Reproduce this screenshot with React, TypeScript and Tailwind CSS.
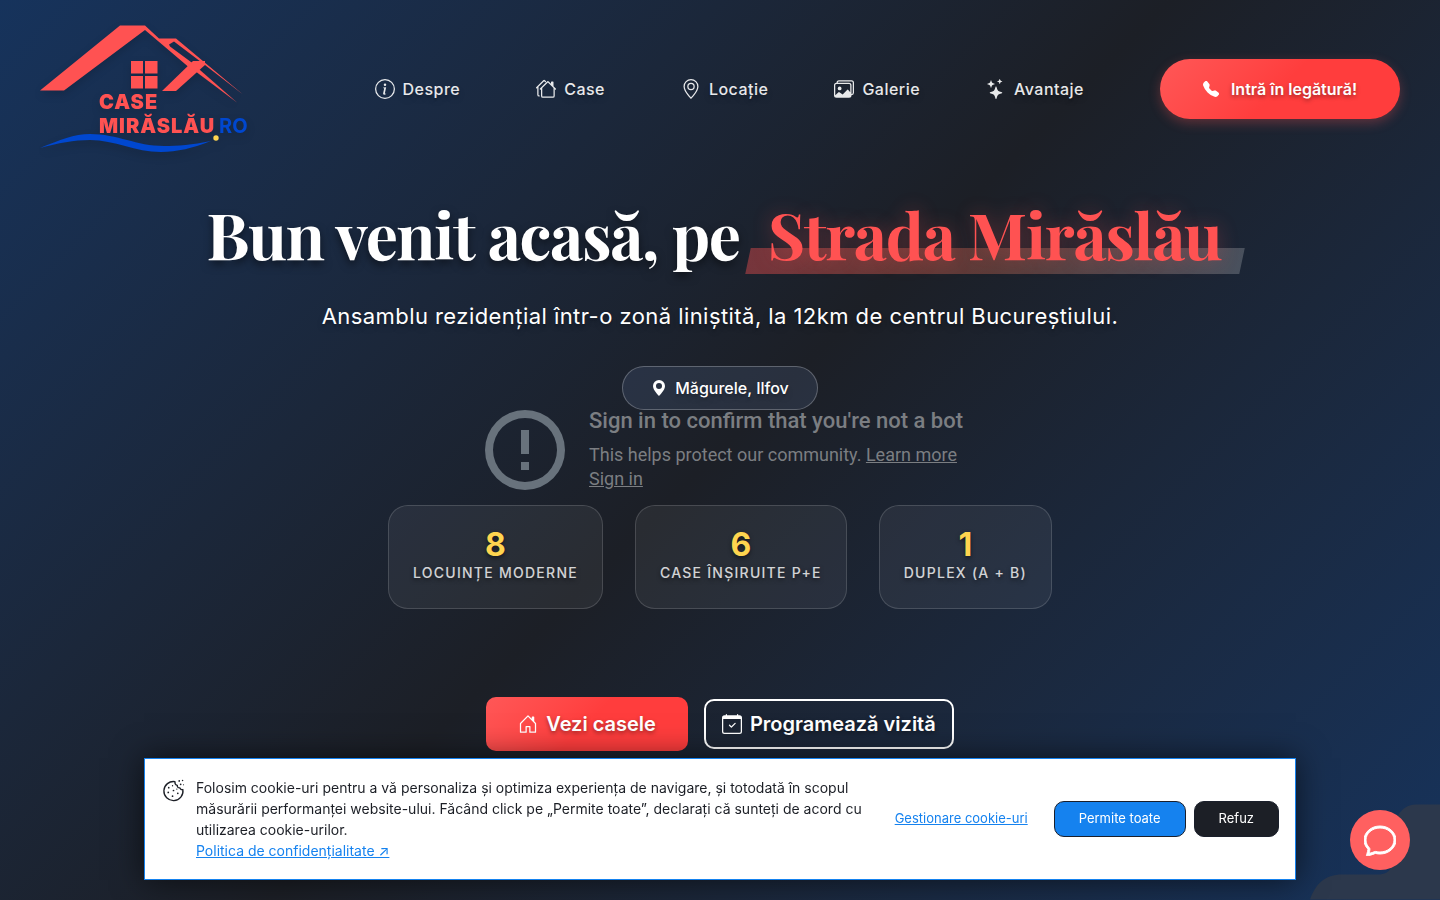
import type { ReactNode } from 'react'
import type { IconType } from 'react-icons'
import {
  BsCalendarCheck,
  BsChat,
  BsGeoAlt,
  BsGeoAltFill,
  BsHouseDoor,
  BsHouses,
  BsImages,
  BsInfoCircle,
  BsStars,
  BsTelephoneFill,
} from 'react-icons/bs'

const STATS = [
  { value: '8', label: 'Locuințe moderne' },
  { value: '6', label: 'Case înșiruite P+E' },
  { value: '1', label: 'Duplex (A + B)' },
]

function Logo() {
  return (
    <a href="#" className="block w-52 shrink-0" aria-label="Case Mirăslău">
      <svg viewBox="0 0 208 130" className="h-auto w-full overflow-visible drop-shadow-lg">
        <g fill="#ff5252">
          <path d="M0 66.500 80 1.500h25l14 13h17l67 56-38-29.500-31-23.500-5 3 1 2 23 17-5 3L105 6 24 66.500z" />
          <path d="M122 67l31-30h12v4l-29 26z" />
          <path d="M147 41l5-2 45 39.500z" />
          <path d="M91 37h12v12.500H91zM105 37h12.500v12.500H105zM91 52h12v12.500H91zM105 52h12.500v12.500H105z" />
        </g>
        <path
          d="M0 124C20 116 34 110 50 110c28 0 46 12 74 12 14 0 28-1 47-5-18 7-34 11-50 11-26 0-46-12-71-12-16 0-32 3-50 8z"
          fill="#0047cf"
        />
        <circle cx="176" cy="114" r="2.700" fill="#ffd54f" />
        <g fontFamily="Inter, sans-serif" fontSize="20">
          <g fill="#ff5252" fontWeight="900" className="tracking-wider">
            <text x="59" y="85">CASE</text>
            <text x="59" y="109">MIRĂSLĂU</text>
          </g>
          <text x="179" y="109" fill="#0047cf" fontWeight="700">RO</text>
        </g>
      </svg>
    </a>
  )
}

function NavLink({ href, icon: Icon, label }: { href: string; icon: IconType; label: string }) {
  return (
    <a
      href={href}
      className="flex items-center gap-2 text-base font-medium tracking-[0.03em] text-white/90 text-shadow-lg"
    >
      <Icon size={20} aria-hidden="true" />
      {label}
    </a>
  )
}

function Header() {
  return (
    <header className="flex items-center justify-between px-10 pt-6">
      <Logo />
      <div className="flex items-center gap-19">
        <nav className="flex items-center gap-19">
          <NavLink href="#despre" icon={BsInfoCircle} label="Despre" />
          <NavLink href="#case" icon={BsHouses} label="Case" />
          <div className="flex items-center gap-[66px]">
            <NavLink href="#locatie" icon={BsGeoAlt} label="Locație" />
            <NavLink href="#galerie" icon={BsImages} label="Galerie" />
            <NavLink href="#avantaje" icon={BsStars} label="Avantaje" />
          </div>
        </nav>
        <a
          href="#contact"
          className="flex h-15 w-60 items-center justify-center gap-3 rounded-full bg-linear-135 from-[#ff5757] to-[#ff3d3d] to-50% text-base font-semibold text-white shadow-[0_4px_12px_rgba(255,82,82,0.3)] text-shadow-[0_2px_4px_rgba(0,0,0,0.4)]"
        >
          <BsTelephoneFill size={16} aria-hidden="true" />
          Intră în legătură!
        </a>
      </div>
    </header>
  )
}

function VideoNotice() {
  return (
    <div className="flex h-20 items-center gap-6 pl-2 text-left font-[Roboto,sans-serif] text-[#7b7e82]">
      <svg viewBox="0 0 80 80" className="size-20 shrink-0 fill-[#68727c]" aria-hidden="true">
        <path d="M40 0a40 40 0 1 0 0 80 40 40 0 0 0 0-80zm0 72a32 32 0 1 1 0-64 32 32 0 0 1 0 64zM36 20h8v24h-8zm0 32h8v8h-8z" />
      </svg>
      <div className="text-lg leading-6">
        <p className="mb-2.5 text-[22px] leading-6 font-medium">
          Sign in to confirm that you're not a bot
        </p>
        <p>
          This helps protect our community.{' '}
          <a href="#learn" className="underline">Learn more</a>
        </p>
        <a href="#signin" className="underline">Sign in</a>
      </div>
    </div>
  )
}

function StatCard({ value, label }: { value: string; label: string }) {
  return (
    <li className="flex h-26 flex-col items-center rounded-[20px] border border-white/15 bg-white/6 px-6 pt-[21px]">
      <span className="text-[32px] leading-9 font-bold text-[#ffd54f] text-shadow-[0_2px_4px_rgba(0,0,0,0.5)]">
        {value}
      </span>
      <span className="text-sm font-medium tracking-[0.09em] text-white/80 uppercase text-shadow-[0_2px_4px_rgba(0,0,0,0.5)]">
        {label}
      </span>
    </li>
  )
}

function Hero() {
  return (
    <main className="flex flex-col items-center text-center">
      <h1 className="mt-10 flex items-baseline gap-4 font-['Playfair_Display','Liberation_Serif',serif] text-[64px] leading-20 font-bold tracking-[-0.02em] whitespace-nowrap text-white text-shadow-[0_4px_8px_rgba(0,0,0,0.5)]">
        Bun venit acasă, pe
        <span className="relative px-3 text-[#ff5252] text-shadow-[0_0_20px_rgba(255,82,82,0.3)]">
          <span className="absolute -inset-x-2 bottom-0 h-[26px] -skew-x-12 bg-linear-90 from-[#ff5252]/40 via-[#ff8060]/28 to-white/20" />
          <span className="relative">Strada Mirăslău</span>
        </span>
      </h1>
      <p className="mt-6 text-[22px] leading-9 tracking-[0.02em] text-white text-shadow-lg">
        Ansamblu rezidențial într-o zonă liniștită, la 12km de centrul Bucureștiului.
      </p>
      <p className="mt-8 flex h-11 items-center gap-2 rounded-full border border-white/25 bg-[#7896c8]/15 px-7 text-base font-medium text-white text-shadow-lg">
        <BsGeoAltFill size={16} aria-hidden="true" />
        Măgurele, Ilfov
      </p>
      <VideoNotice />
      <ul className="mt-[15px] flex gap-8">
        {STATS.map((stat) => (
          <StatCard key={stat.label} {...stat} />
        ))}
      </ul>
      <div className="mt-22 flex items-center gap-4 text-xl font-semibold text-white text-shadow-[0_2px_4px_rgba(0,0,0,0.4)]">
        <a
          href="#case"
          className="flex h-[54px] items-center gap-2 rounded-[10px] bg-linear-135 from-[#ff5757] to-[#ff3d3d] to-50% px-8"
        >
          <BsHouseDoor size={20} aria-hidden="true" />
          Vezi casele
        </a>
        <a href="#vizita" className="flex h-[50px] items-center gap-2 rounded-[10px] border-2 border-white px-4">
          <BsCalendarCheck size={20} aria-hidden="true" />
          Programează vizită
        </a>
      </div>
    </main>
  )
}

function CookieIcon() {
  return (
    <svg viewBox="0 0 22 22" className="mt-[3px] size-[21px] shrink-0 self-start overflow-visible" aria-hidden="true">
      <path
        d="M12.500 1.700A10 10 0 1 0 20.800 10c-1.500.4-2.800-.3-3.100-1.700-1.700.2-2.900-.9-2.700-2.600-1.700-.3-2.700-1.900-2.500-4z"
        fill="none"
        stroke="#1c1f26"
        strokeWidth="1.400"
        strokeLinejoin="round"
      />
      <g fill="#1c1f26">
        <circle cx="6" cy="8" r="0.900" />
        <circle cx="10" cy="6" r="0.700" />
        <circle cx="11" cy="11" r="0.900" />
        <circle cx="5.500" cy="13" r="0.900" />
        <circle cx="10" cy="17" r="0.900" />
        <circle cx="15.500" cy="14" r="0.900" />
        <circle cx="14.500" cy="9.500" r="0.700" />
        <circle cx="17" cy="1" r="0.900" />
        <circle cx="20.500" cy="0.500" r="0.800" />
        <circle cx="18.500" cy="4.500" r="0.900" />
        <circle cx="21.500" cy="5" r="0.600" />
      </g>
    </svg>
  )
}

function CookieButton({ className, children }: { className: string; children: ReactNode }) {
  return (
    <button
      type="button"
      className={`h-9 rounded-[10px] border border-[#1a1f2b] px-6 text-[13px] text-white ${className}`}
    >
      {children}
    </button>
  )
}

function CookieBar() {
  return (
    <section
      aria-label="Cookie-uri"
      className="fixed inset-x-1/10 bottom-5 flex items-center border border-[#1582ef] bg-white py-[18px] pr-4 pl-[18px] shadow-[0_0_30px_rgba(0,0,0,0.6)]"
    >
      <CookieIcon />
      <p className="ml-3 max-w-[680px] flex-1 text-sm leading-[21px] text-[#1c1f26]">
        Folosim cookie-uri pentru a vă personaliza și optimiza experiența de navigare, și totodată în
        scopul măsurării performanței website-ului. Făcând click pe „Permite toate”, declarați că
        sunteți de acord cu utilizarea cookie-urilor.
        <br />
        <a href="#politica" className="text-[#1582ef] underline">
          Politica de confidențialitate ↗
        </a>
      </p>
      <div className="ml-auto flex items-center">
        <button type="button" className="mr-[26px] text-[13px] text-[#1582ef] underline">
          Gestionare cookie-uri
        </button>
        <div className="flex gap-2">
          <CookieButton className="bg-[#1582ef]">Permite toate</CookieButton>
          <CookieButton className="bg-[#1c1f26]">Refuz</CookieButton>
        </div>
      </div>
    </section>
  )
}

export default function App() {
  return (
    <div className="relative min-h-screen overflow-hidden bg-linear-135 from-[#16335c] via-[#1c1f26] to-[#16335c] font-[Inter,sans-serif]">
      <svg
        viewBox="0 0 130 95"
        className="absolute right-0 bottom-0 h-24 w-[130px] fill-[#2c384c]"
        aria-hidden="true"
      >
        <path d="M0 95C6 79 15 70 32 70h38c14-2 12-10 12-30C82 20 88 0 106 0h24v95z" />
      </svg>
      <Header />
      <Hero />
      <CookieBar />
      <button
        type="button"
        aria-label="Chat"
        className="fixed right-[30px] bottom-[30px] flex size-15 items-center justify-center rounded-full bg-[#ff6060] text-white"
      >
        <BsChat size={32} strokeWidth={0.5} aria-hidden="true" />
      </button>
    </div>
  )
}
